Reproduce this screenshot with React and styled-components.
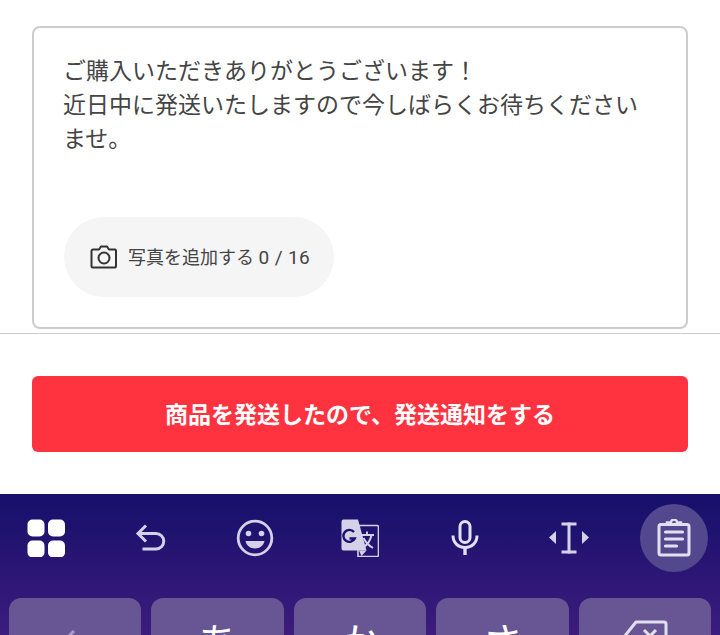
import styled, { createGlobalStyle } from "styled-components";

const GlobalStyle = createGlobalStyle`
  html, body {
    margin: 0;
    padding: 0;
    background: #fff;
  }
`;

const App = () => {
  return (
    <Root>
      <GlobalStyle />
      <Card>
        <Message>
          ご購入いただきありがとうございます！
          <br />
          近日中に発送いたしますので今しばらくお待ちくださいませ。
        </Message>
        <PhotoButton>
          <svg width="28" height="24" viewBox="0 0 28 24" fill="none" stroke="#333" strokeWidth="2" strokeLinejoin="round">
            <path d="M3 4.5h6l2-3h6l2 3h6a1.5 1.5 0 0 1 1 1v15.500a1.500 1.500 0 0 1-1 1.500H3a1.500 1.500 0 0 1-1.500-1.500V6A1.500 1.500 0 0 1 3 4.500z" />
            <circle cx="14" cy="13" r="5.500" />
          </svg>
          <PhotoLabel>
            写真を追加する <Count>0 / 16</Count>
          </PhotoLabel>
        </PhotoButton>
      </Card>
      <Divider />
      <ActionArea>
        <SubmitButton>商品を発送したので、発送通知をする</SubmitButton>
      </ActionArea>
      <Keyboard>
        <Toolbar>
          <ToolSlot>
            <svg width="38" height="38" viewBox="0 0 38 38" fill="#fff">
              <rect x="0.500" y="0.500" width="17" height="17" rx="5" />
              <rect x="21" y="0.500" width="17" height="17" rx="5" />
              <rect x="0.500" y="21.500" width="17" height="17" rx="5" />
              <rect x="21" y="21.500" width="17" height="17" rx="5" />
            </svg>
          </ToolSlot>
          <ToolSlot>
            <svg width="32" height="32" viewBox="0 0 32 32" fill="none" stroke="#d5d1e8" strokeWidth="3">
              <path d="M11 3.500 3 11.500l8 8" />
              <path d="M3.500 11.500H21a7.200 7.200 0 0 1 0 15.500H7.500" />
            </svg>
          </ToolSlot>
          <ToolSlot>
            <svg width="38" height="38" viewBox="0 0 38 38" fill="none">
              <circle cx="19" cy="19" r="16.800" stroke="#d5d1e8" strokeWidth="2.800" />
              <circle cx="12.500" cy="14.500" r="2.800" fill="#d5d1e8" />
              <circle cx="25.500" cy="14.500" r="2.800" fill="#d5d1e8" />
              <path d="M9.500 22h19c-1 4.800-5 7.500-9.500 7.500S10.500 26.800 9.500 22z" fill="#d5d1e8" />
            </svg>
          </ToolSlot>
          <ToolSlot>
            <svg width="38" height="38" viewBox="0 0 38 38">
              <path d="M17 6.500h19a1.500 1.500 0 0 1 1.500 1.500v28a1.500 1.500 0 0 1-1.500 1.500H17z" fill="none" stroke="#d5d1e8" strokeWidth="1.600" />
              <path d="M2.500 0.500h14.500l8.500 31H2.500a2 2 0 0 1-2-2V2.500a2 2 0 0 1 2-2z" fill="#d5d1e8" />
              <path d="M18 31.500h7.500l-5 5.500z" fill="#d5d1e8" />
              <path d="M13 13a6 6 0 1 0 0.800 6.500H8.500" fill="none" stroke="#1c1170" strokeWidth="2.400" />
              <path d="M20 16h13M26 12.500V16M30.500 16c-1 5.500-4.500 10-8.500 12.500M22.500 19c2 4 5 7.500 9.500 10" fill="none" stroke="#d5d1e8" strokeWidth="1.900" />
            </svg>
          </ToolSlot>
          <ToolSlot>
            <svg width="28" height="36" viewBox="0 0 28 36" fill="none">
              <rect x="9" y="1.500" width="10" height="21" rx="5" stroke="#e2dff0" strokeWidth="3" />
              <path d="M2 15.500c0 7 5 12 12 12s12-5 12-12" stroke="#e2dff0" strokeWidth="3" />
              <path d="M14 27v8" stroke="#e2dff0" strokeWidth="3.400" />
            </svg>
          </ToolSlot>
          <ToolSlot>
            <svg width="42" height="32" viewBox="0 0 42 32" fill="#d5d1e8">
              <path d="M8 9v13L1 15.500z" />
              <path d="M34 9v13l7-6.500z" />
              <rect x="13.500" y="0.500" width="15" height="3" />
              <rect x="13.500" y="28.500" width="15" height="3" />
              <rect x="19.500" y="0.500" width="3" height="31" />
            </svg>
          </ToolSlot>
          <ActiveSlot>
            <svg width="34" height="38" viewBox="0 0 34 38" fill="none" stroke="#e2dff0">
              <rect x="2" y="5.500" width="30" height="30.500" rx="2" strokeWidth="3" />
              <path d="M10 5V3.500h4a3 3 0 0 1 6 0h4V6" strokeWidth="2.400" />
              <path d="M8.500 13h17M8.500 20h17M8.500 27h11" strokeWidth="3.200" strokeLinecap="round" />
            </svg>
          </ActiveSlot>
        </Toolbar>
        <KeyRow>
          <Key>
            <FadedArrow width="32" height="32" viewBox="0 0 32 32" fill="none" stroke="#a99cc8" strokeWidth="3">
              <path d="M15 5 4 16l11 11M4 16h26" />
            </FadedArrow>
          </Key>
          <Key>
            <KeyLabel>あ</KeyLabel>
          </Key>
          <Key>
            <KeyLabel>か</KeyLabel>
          </Key>
          <Key>
            <KeyLabel>さ</KeyLabel>
          </Key>
          <Key>
            <svg width="46" height="32" viewBox="0 0 46 32" fill="none" stroke="#e2dff0" strokeWidth="3">
              <path d="M14 2h28a2 2 0 0 1 2 2v26a2 2 0 0 1-2 2H14L2 17z" strokeLinejoin="round" />
              <path d="M22 10l12 12M34 10 22 22" />
            </svg>
          </Key>
        </KeyRow>
      </Keyboard>
    </Root>
  );
};

export default App;

const Root = styled.div`
  width: 720px;
  height: 635px;
  overflow: hidden;
  padding-top: 26px;
  box-sizing: border-box;
  font-family: "Roboto", "Noto Sans CJK JP", sans-serif;
`;

const Card = styled.div`
  margin: 0 32px;
  padding: 27px 30px 30px;
  border: 2px solid rgb(204, 204, 204);
  border-radius: 8px;
`;

const Message = styled.p`
  margin: 0 0 60px -1px;
  font-size: 23px;
  line-height: 34px;
  color: rgb(68, 68, 68);
`;

const PhotoButton = styled.div`
  display: inline-flex;
  align-items: center;
  gap: 10px;
  width: 270px;
  height: 80px;
  padding-left: 26px;
  box-sizing: border-box;
  vertical-align: top;
  background-color: rgb(245, 245, 245);
  border-radius: 40px;
`;

const PhotoLabel = styled.span`
  margin-top: -2px;
  font-size: 18px;
  color: rgb(68, 68, 68);
`;

const Count = styled.span`
  font-size: 19px;
  letter-spacing: 0.4px;
`;

const Divider = styled.div`
  height: 1px;
  margin-top: 4px;
  background-color: rgb(204, 204, 204);
`;

const ActionArea = styled.div`
  padding: 42px 32px;
`;

const SubmitButton = styled.div`
  display: flex;
  align-items: center;
  justify-content: center;
  height: 76px;
  padding-bottom: 2px;
  box-sizing: border-box;
  background-color: rgb(255, 51, 63);
  border-radius: 6px;
  font-size: 23px;
  font-weight: 700;
  color: #fff;
`;

const Keyboard = styled.div`
  height: 200px;
  background: linear-gradient(180deg, rgb(22, 15, 107) 0%, rgb(60, 28, 125) 70%);
`;

const Toolbar = styled.div`
  display: flex;
  justify-content: space-between;
  padding: 10px 12px 26px;
`;

const ToolSlot = styled.div`
  display: flex;
  align-items: center;
  justify-content: center;
  width: 68px;
  height: 68px;
`;

const ActiveSlot = styled(ToolSlot)`
  background-color: rgb(83, 72, 142);
  border-radius: 50%;
`;

const KeyRow = styled.div`
  display: flex;
  gap: 10px;
  padding: 0 9px;
`;

const Key = styled.div`
  display: flex;
  justify-content: center;
  flex: 1;
  height: 90px;
  padding-top: 22px;
  box-sizing: border-box;
  background-color: rgb(104, 85, 148);
  border-radius: 12px;
`;

const KeyLabel = styled.span`
  font-size: 41px;
  line-height: 48px;
  color: #fff;
`;

const FadedArrow = styled.svg`
  margin-top: 6px;
`;
